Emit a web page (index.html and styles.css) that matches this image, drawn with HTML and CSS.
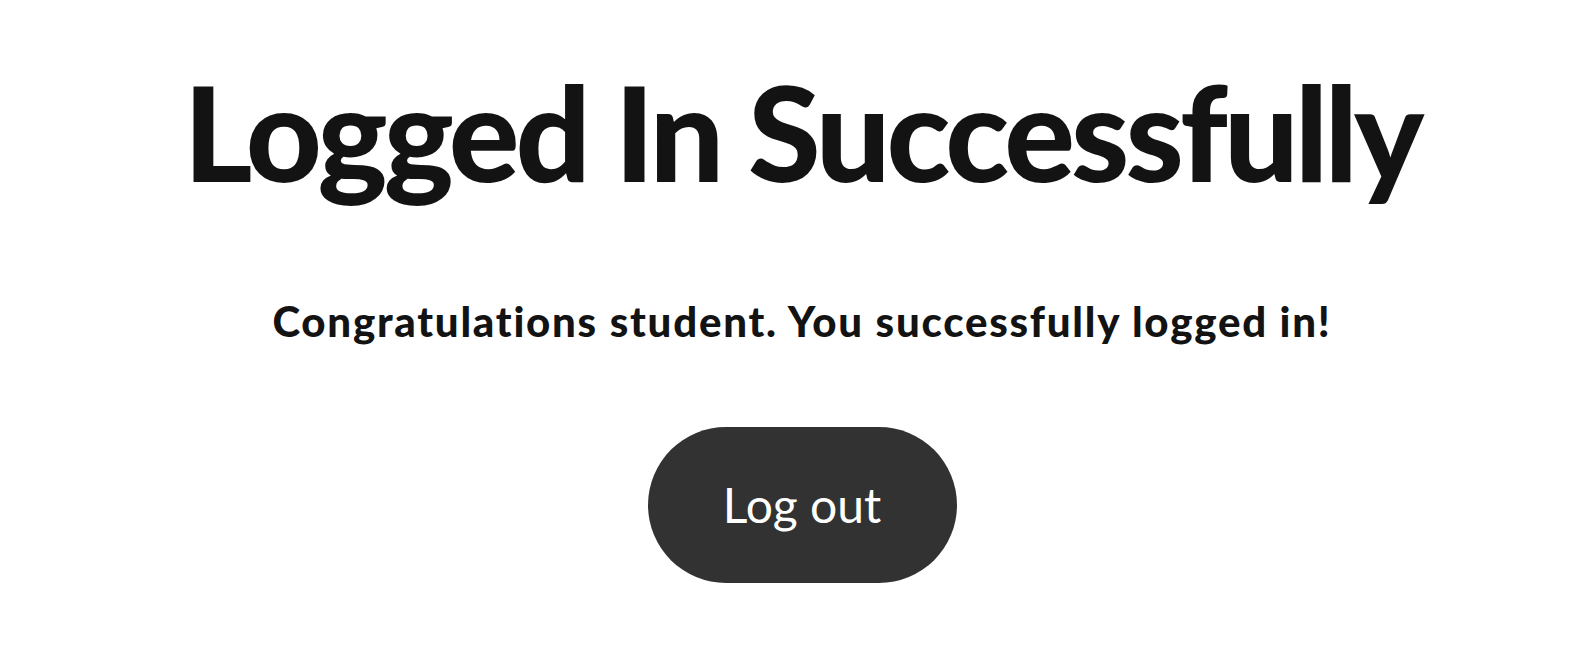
FILE: index.html
```html
<!DOCTYPE html>
<html lang="en">
<head>
<meta charset="utf-8">
<title>Logged In Successfully</title>
<link rel="stylesheet" href="styles.css">
</head>
<body>
<main class="page">
  <h1 class="title">Logged In Successfully</h1>
  <p class="message">Congratulations student. You successfully logged in!</p>
  <button class="logout">Log out</button>
</main>
</body>
</html>
```
FILE: styles.css
```css
html, body {
  margin: 0;
  padding: 0;
  background: #ffffff;
}
body {
  font-family: Lato, "Open Sans", sans-serif;
  color: #131313;
  font-variant-ligatures: none;
}
.page {
  display: flex;
  flex-direction: column;
  align-items: center;
  padding: 0 0 0 17px;
}
.title {
  margin: 52px 0 0;
  font-size: 132px;
  font-weight: 900;
  line-height: 1.2;
  letter-spacing: -3.9px;
}
.message {
  margin: 86px 0 0;
  font-size: 42px;
  font-weight: 900;
  line-height: 1.2;
  letter-spacing: 1.75px;
}
.logout {
  margin-top: 80px;
  width: 309px;
  height: 156px;
  border: none;
  border-radius: 78px;
  background: #323232;
  color: #ffffff;
  font-family: Lato, sans-serif;
  font-size: 48px;
  font-weight: 400;
}
```
